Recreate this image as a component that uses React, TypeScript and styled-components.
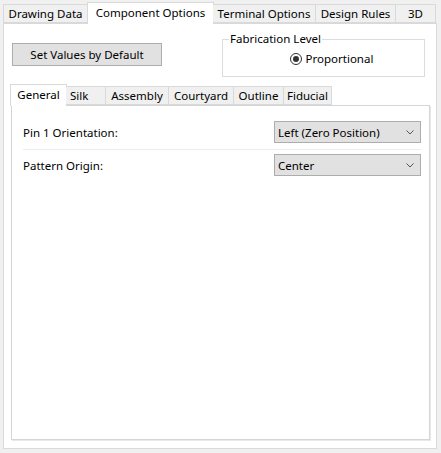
import React from 'react'
import styled, { createGlobalStyle } from 'styled-components'

const GlobalStyle = createGlobalStyle`
  html, body {
    margin: 0;
    padding: 0;
    background: #f0f0f0;
  }
  body {
    font-family: 'Noto Sans', 'Liberation Sans', sans-serif;
    font-size: 11.5px;
    color: #000;
  }
`

const Window = styled.div`
  width: 441px;
  height: 453px;
  box-sizing: border-box;
  padding: 2px 4px 4px 3px;
  background: #f0f0f0;
  display: flex;
  flex-direction: column;
`

const TabStrip = styled.div`
  display: flex;
  align-items: flex-end;
  height: 21px;
  position: relative;
  z-index: 1;
`

const Tab = styled.div<{ $active?: boolean; $width: number; $left?: boolean }>`
  box-sizing: border-box;
  width: ${({ $width }) => $width}px;
  height: ${({ $active }) => ($active ? 22 : 19)}px;
  margin-bottom: ${({ $active }) => ($active ? -1 : 0)}px;
  margin-left: ${({ $active }) => ($active ? -1 : 0)}px;
  margin-right: ${({ $active }) => ($active ? -1 : 0)}px;
  border: 1px solid #d9d9d9;
  border-bottom: ${({ $active }) => ($active ? 'none' : '1px solid #d9d9d9')};
  border-left: ${({ $active }) => ($active ? '1px solid #d9d9d9' : 'none')};
  background: ${({ $active }) => ($active ? '#fff' : '#f0f0f0')};
  display: flex;
  align-items: center;
  justify-content: ${({ $left }) => ($left ? 'flex-start' : 'center')};
  padding-left: ${({ $left }) => ($left ? 4 : 0)}px;
  padding-bottom: ${({ $active }) => ($active ? 2 : 0)}px;
  white-space: nowrap;
  &:first-child {
    border-left: 1px solid #d9d9d9;
  }
`

const Panel = styled.div`
  flex: 1;
  box-sizing: border-box;
  border: 1px solid #d9d9d9;
  background: #fff;
  display: flex;
  flex-direction: column;
  padding: 0 6px 8px 7px;
`

const TopRow = styled.div`
  display: flex;
  justify-content: space-between;
  align-items: flex-start;
  height: 60px;
  padding-right: 5px;
`

const Button = styled.button`
  margin: 19px 0 0 1px;
  width: 150px;
  height: 23px;
  box-sizing: border-box;
  background: #e1e1e1;
  border: 1px solid #adadad;
  font: inherit;
  color: #000;
  padding: 0;
`

const Group = styled.fieldset`
  margin: 8px 0 0 0;
  width: 203px;
  height: 45px;
  box-sizing: border-box;
  border: 1px solid #dcdcdc;
  padding: 0;
  display: flex;
  justify-content: center;
  align-items: flex-start;
`

const Legend = styled.legend`
  padding: 0 1px;
  margin-left: 6px;
  line-height: 14px;
`

const Radio = styled.label`
  display: flex;
  align-items: center;
  gap: 4px;
  margin-top: 5px;
  margin-left: 16px;
`

const RadioDot = styled.span`
  width: 12px;
  height: 12px;
  box-sizing: border-box;
  border-radius: 50%;
  border: 1px solid #333;
  display: flex;
  align-items: center;
  justify-content: center;
  &::after {
    content: '';
    width: 6px;
    height: 6px;
    border-radius: 50%;
    background: #333;
  }
`

const InnerTabs = styled.div`
  display: flex;
  flex-direction: column;
  flex: 1;
`

const InnerTabPanel = styled.div`
  flex: 1;
  box-sizing: border-box;
  border: 1px solid #d5d5d5;
  box-shadow: 1px 1px 0 #e8e8e8;
  background: #fff;
  padding: 15px 8px 0 11px;
  display: flex;
  flex-direction: column;
`

const Row = styled.div`
  display: flex;
  align-items: center;
  justify-content: space-between;
  height: 22px;
`

const Separator = styled.div`
  height: 1px;
  background: #ececec;
  margin: 6px 0 4px 0;
`

const Select = styled.div`
  width: 147px;
  height: 22px;
  box-sizing: border-box;
  background: #e1e1e1;
  border: 1px solid #adadad;
  display: flex;
  align-items: center;
  justify-content: space-between;
  padding: 0 6px 0 3px;
`

const Chevron = () => (
  <svg width="8" height="5" viewBox="0 0 8 5">
    <polyline points="0.5,0.5 4,4 7.5,0.5" fill="none" stroke="#555" strokeWidth="1" />
  </svg>
)

const outerTabs = [
  { label: 'Drawing Data', width: 85 },
  { label: 'Component Options', width: 127, active: true },
  { label: 'Terminal Options', width: 103 },
  { label: 'Design Rules', width: 80 },
  { label: '3D', width: 40 },
]

const innerTabs = [
  { label: 'General', width: 57, active: true },
  { label: 'Silk', width: 40, left: true },
  { label: 'Assembly', width: 63 },
  { label: 'Courtyard', width: 65 },
  { label: 'Outline', width: 50 },
  { label: 'Fiducial', width: 48 },
]

export default function App() {
  return (
    <>
      <GlobalStyle />
      <Window>
        <TabStrip>
          {outerTabs.map(t => (
            <Tab key={t.label} $active={t.active} $width={t.width}>
              {t.label}
            </Tab>
          ))}
        </TabStrip>
        <Panel>
          <TopRow>
            <Button>Set Values by Default</Button>
            <Group>
              <Legend>Fabrication Level</Legend>
              <Radio>
                <RadioDot />
                Proportional
              </Radio>
            </Group>
          </TopRow>
          <InnerTabs>
            <TabStrip>
              {innerTabs.map(t => (
                <Tab key={t.label} $active={t.active} $width={t.width} $left={t.left}>
                  {t.label}
                </Tab>
              ))}
            </TabStrip>
            <InnerTabPanel>
              <Row>
                <span>Pin 1 Orientation:</span>
                <Select>
                  Left (Zero Position)
                  <Chevron />
                </Select>
              </Row>
              <Separator />
              <Row>
                <span>Pattern Origin:</span>
                <Select>
                  Center
                  <Chevron />
                </Select>
              </Row>
            </InnerTabPanel>
          </InnerTabs>
        </Panel>
      </Window>
    </>
  )
}
